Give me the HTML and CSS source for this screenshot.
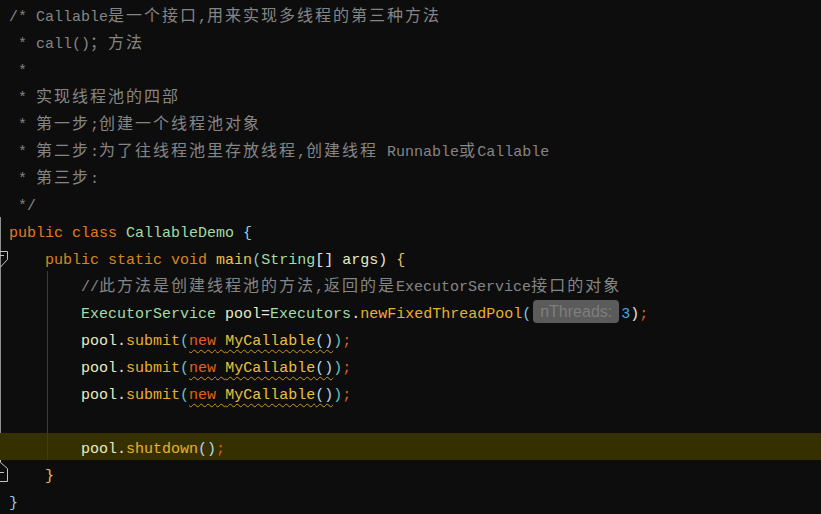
FILE: index.html
```html
<!DOCTYPE html>
<html>
<head>
<meta charset="utf-8">
<link rel="stylesheet" href="styles.css">
</head>
<body>
<div class="editor">
  <div class="ln"><div class="gut"></div><div class="code cm">/* Callable<span class="z">是一个接口</span>,<span class="z">用来实现多线程的第三种方法</span></div></div>
  <div class="ln"><div class="gut"></div><div class="code cm"> * call()<span class="z">；方法</span></div></div>
  <div class="ln"><div class="gut"></div><div class="code cm"> *</div></div>
  <div class="ln"><div class="gut"></div><div class="code cm"> * <span class="z">实现线程池的四部</span></div></div>
  <div class="ln"><div class="gut"></div><div class="code cm"> * <span class="z">第一步</span>;<span class="z">创建一个线程池对象</span></div></div>
  <div class="ln"><div class="gut"></div><div class="code cm"> * <span class="z">第二步</span>:<span class="z">为了往线程池里存放线程</span>,<span class="z">创建线程</span> Runnable<span class="z">或</span>Callable</div></div>
  <div class="ln"><div class="gut"></div><div class="code cm"> * <span class="z">第三步</span>:</div></div>
  <div class="ln"><div class="gut"></div><div class="code cm"> */</div></div>
  <div class="ln"><div class="gut fl"></div><div class="code"><span class="kw">public</span> <span class="kw">class</span> <span class="ty">CallableDemo</span> <span class="b1">{</span></div></div>
  <div class="ln"><div class="gut fl"><svg class="mk" width="9" height="27" viewBox="0 0 9 27"><path d="M0 7.5H7.5V15.5L0.5 23M0 11.5H4" fill="none" stroke="#c4c4c4" stroke-width="1"/></svg></div><div class="code">    <span class="kw2">public</span> <span class="kw2">static</span> <span class="kw2">void</span> <span class="fn">main</span><span class="p1">(</span><span class="ty">String</span><span class="wh">[]</span> <span class="var">args</span><span class="wh">)</span> <span class="b2">{</span></div></div>
  <div class="ln"><div class="gut fl"></div><div class="code">    <span class="g">    </span><span class="cm">//<span class="z">此方法是创建线程池的方法</span>,<span class="z">返回的是</span>ExecutorService<span class="z">接口的对象</span></span></div></div>
  <div class="ln"><div class="gut fl"></div><div class="code">    <span class="g">    </span><span class="ty">ExecutorService</span> <span class="var">pool</span><span class="wh">=</span><span class="ty">Executors</span><span class="wh">.</span><span class="mt">newFixedThreadPool</span><span class="p2">(</span><span class="hint">nThreads:</span><span class="num">3</span><span class="wh">)</span><span class="sc">;</span></div></div>
  <div class="ln"><div class="gut fl"></div><div class="code">    <span class="g">    </span><span class="var">pool</span><span class="wh">.</span><span class="mt">submit</span><span class="p3">(</span><span class="sq"><span class="nw">new</span> <span class="cl">MyCallable</span><span class="p4">()</span></span><span class="p3">)</span><span class="sc">;</span></div></div>
  <div class="ln"><div class="gut fl"></div><div class="code">    <span class="g">    </span><span class="var">pool</span><span class="wh">.</span><span class="mt">submit</span><span class="p3">(</span><span class="sq"><span class="nw">new</span> <span class="cl">MyCallable</span><span class="p4">()</span></span><span class="p3">)</span><span class="sc">;</span></div></div>
  <div class="ln"><div class="gut fl"></div><div class="code">    <span class="g">    </span><span class="var">pool</span><span class="wh">.</span><span class="mt">submit</span><span class="p3">(</span><span class="sq"><span class="nw">new</span> <span class="cl">MyCallable</span><span class="p4">()</span></span><span class="p3">)</span><span class="sc">;</span></div></div>
  <div class="ln"><div class="gut fl"></div><div class="code">    <span class="g">    </span></div></div>
  <div class="ln hl"><div class="gut"></div><div class="code">    <span class="g">    </span><span class="var">pool</span><span class="wh">.</span><span class="mt">shutdown</span><span class="p4">()</span><span class="sc">;</span></div></div>
  <div class="ln"><div class="gut"><svg class="mk" width="9" height="27" viewBox="0 0 9 27"><path d="M0.5 0V2.5L7.5 8.5V21.5H0M0 12.5H4" fill="none" stroke="#c4c4c4" stroke-width="1"/></svg></div><div class="code">    <span class="b2">}</span></div></div>
  <div class="ln"><div class="gut"></div><div class="code"><span class="b1">}</span></div></div>
</div>
</body>
</html>
```

FILE: styles.css
```css
html, body {
  margin: 0;
  padding: 0;
  background: #0d0d0d;
  overflow: hidden;
}

.editor {
  display: flex;
  flex-direction: column;
  padding-top: 1px;
}

.ln {
  display: flex;
  height: 27px;
}

.ln.hl {
  background: #363000;
}

.gut {
  width: 9px;
  flex: none;
  box-sizing: border-box;
}

.gut.fl {
  border-left: 1px solid #8e8e8e;
}

.gut.fl .mk {
  margin-left: -1px;
}

.mk {
  display: block;
}

.code {
  font-family: "Liberation Mono", monospace;
  font-size: 15px;
  line-height: 27px;
  height: 27px;
  white-space: pre;
  color: #e0e0e0;
  padding-top: 3px;
  box-sizing: border-box;
  overflow: visible;
}

.z {
  font-family: "Noto Sans CJK SC", sans-serif;
  font-size: 16px;
  letter-spacing: 2px;
  line-height: 0;
}

.g {
  display: inline-block;
  height: 27px;
  margin-top: -3px;
  vertical-align: top;
  background: linear-gradient(#3a3a3a, #3a3a3a) 2px 0 / 1px 100% no-repeat;
}

.cm { color: #858585; }
.kw { color: #e07a26; }
.kw2 { color: #d8861e; }
.ty { color: #a2dca6; }
.fn { color: #e8c64a; }
.var { color: #e6ecc4; }
.wh { color: #e4e4e4; }
.mt { color: #e8b030; }
.nw { color: #e0621c; }
.cl { color: #e8c040; }
.num { color: #40aae0; }
.sc { color: #d8601e; }
.b1 { color: #90d0e0; }
.b2 { color: #e8c060; }
.p1 { color: #80d0c8; }
.p2 { color: #70c8e8; }
.p3 { color: #66c4c4; }
.p4 { color: #b4d8f0; }

.sq {
  text-decoration: underline wavy #c89a28;
  text-decoration-thickness: 1px;
  text-underline-offset: 4px;
}

.hint {
  display: inline-block;
  vertical-align: top;
  margin: -1px 2px 0 2px;
  height: 23px;
  line-height: 23px;
  padding: 0 7px;
  border-radius: 4px;
  background: #5b5b5b;
  color: #7e7e7e;
  font-family: "Liberation Sans", Arial, sans-serif;
  font-size: 16px;
}
```
